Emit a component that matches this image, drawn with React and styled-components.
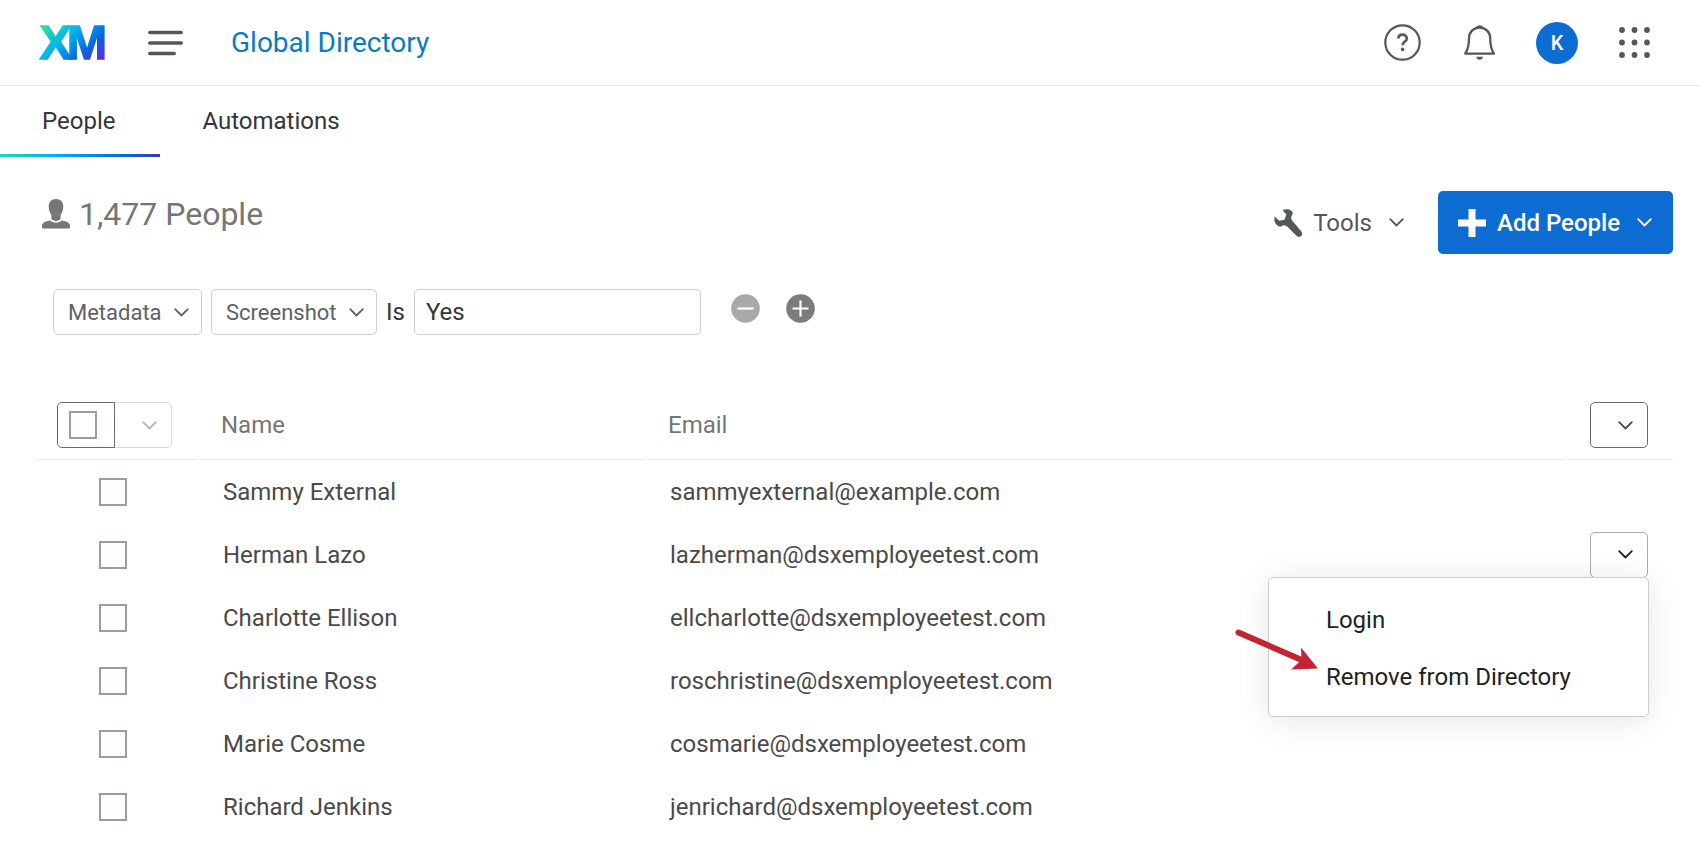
import React, { useState } from 'react';
import styled, { createGlobalStyle } from 'styled-components';

const GlobalStyle = createGlobalStyle`
  * {
    box-sizing: border-box;
  }

  body {
    margin: 0;
    background: #fff;
    color: #32363a;
    font-family: Roboto, "Liberation Sans", sans-serif;
    font-size: 24px;
    line-height: 32px;
  }

  button, input, select {
    font-family: inherit;
    color: inherit;
    margin: 0;
  }
`

const Header = styled.header`
  display: flex;
  align-items: center;
  height: 86px;
  padding: 0 50px 0 39px;
  border-bottom: 1px solid #e9eaeb;
`

const IconButton = styled.button`
  display: flex;
  padding: 0;
  border: 0;
  background: none;
  color: #54585d;
  cursor: pointer;
`

const LogoLink = styled.a`
  display: flex;
  margin-right: 41px;
`

const AppTitle = styled.a`
  margin-left: 48px;
  color: #0b7bc1;
  font-size: 28px;
  text-decoration: none;
`

const HeaderActions = styled.div`
  display: flex;
  align-items: center;
  gap: 41px;
  margin-left: auto;
`

const Avatar = styled.button`
  width: 42px;
  height: 42px;
  padding: 0;
  border: 0;
  border-radius: 50%;
  background: #0d6cd1;
  color: #fff;
  font-size: 20px;
  font-weight: 500;
`

const Tabs = styled.nav`
  display: flex;
`

const Tab = styled.a`
  height: 71px;
  padding: 19px 45px 0 42px;
  color: #32363a;
  text-decoration: none;
  border-bottom: 3px solid transparent;
  border-image: ${props => props.$active ? 'linear-gradient(90deg, #21d5c5, #04aef0 35%, #0768dd 78%, #3f35b5) 1' : 'none'};
`

const TitleBar = styled.div`
  display: flex;
  align-items: flex-start;
  justify-content: space-between;
  padding: 34px 27px 0 42px;
`

const Title = styled.h1`
  display: flex;
  align-items: center;
  gap: 9px;
  margin: 7px 0 0;
  color: #767676;
  font-size: 32px;
  font-weight: 400;
`

const TitleActions = styled.div`
  display: flex;
  align-items: center;
  gap: 34px;
`

const ToolsButton = styled(IconButton)`
  align-items: center;
  gap: 11px;
  font-size: 24px;
`

const AddButton = styled(ToolsButton)`
  height: 63px;
  padding: 0 21px 0 20px;
  border-radius: 5px;
  background: #0d6cd1;
  color: #fff;
  font-weight: 500;
`

const Caret = styled.span`
  display: flex;
  margin-left: 6px;
`

const Filters = styled.form`
  display: flex;
  align-items: center;
  gap: 9px;
  padding: 35px 27px 0 53px;
`

const SelectBox = styled.span`
  position: relative;
  display: flex;
  color: #5f6163;

  svg {
    position: absolute;
    right: 13px;
    top: 19px;
    pointer-events: none;
  }
`

const Select = styled.select`
  appearance: none;
  height: 46px;
  padding: 0 39px 0 14px;
  border: 1px solid #cfcfcf;
  border-radius: 5px;
  background: #fff;
  font-size: 22px;
`

const ValueInput = styled.input`
  width: 287px;
  height: 46px;
  padding: 0 11px;
  border: 1px solid #cfcfcf;
  border-radius: 5px;
  background: #fff;
  font-size: 24px;
`

const FilterButtons = styled.div`
  display: flex;
  gap: 26px;
  margin-left: 21px;
  padding-bottom: 8px;
`

const Main = styled.main`
  padding: 51px 25px 0 34px;
`

const Table = styled.table`
  width: 100%;
  table-layout: fixed;
  border-spacing: 2px 0;

  th, td {
    height: 63px;
    padding: 0 0 0 23px;
    text-align: left;
    font-weight: 400;
    color: #4a4a4a;
  }

  th {
    height: 74px;
    padding: 5px 0 0 21px;
    color: #767676;
    border-bottom: 1px solid #e9eaeb;
  }

  th:last-child, td:last-child {
    padding-left: 0;
    padding-right: 25px;
  }
`

const SelectCol = styled.col`
  width: 162px;
`

const NameCol = styled.col`
  width: 445px;
`

const ActionCol = styled.col`
  width: 106px;
`

const BulkSelect = styled.div`
  display: flex;
`

const BulkCheck = styled.label`
  display: flex;
  align-items: center;
  width: 58px;
  height: 46px;
  padding-left: 11px;
  border: 1px solid #666a6e;
  border-radius: 5px 0 0 5px;
`

const BulkMenuButton = styled(IconButton)`
  align-items: center;
  width: 57px;
  height: 46px;
  padding-left: 27px;
  border: 1px solid #dcdcdc;
  border-left: 0;
  border-radius: 0 5px 5px 0;
  color: #b4b6b8;
`

const Checkbox = styled.input`
  appearance: none;
  display: block;
  width: 28px;
  height: 28px;
  margin: 0;
  border: 2px solid #969ea9;
  background: #fff;

  &:checked {
    background: #0d6cd1;
  }
`

const CheckLabel = styled.label`
  display: flex;
  margin-left: 40px;
`

const ActionWrap = styled.div`
  position: relative;
  display: flex;
  justify-content: flex-end;
`

const ActionButton = styled(IconButton)`
  align-items: center;
  width: 58px;
  height: 46px;
  padding-left: 27px;
  border: 1px solid ${props => props.$open ? '#a9abad' : '#666a6e'};
  border-radius: 5px;
  color: ${props => props.$open ? '#222' : '#4a4a4a'};
`

const Menu = styled.ul`
  position: absolute;
  z-index: 1;
  top: 45px;
  right: -1px;
  width: 381px;
  margin: 0;
  padding: 14px 0 10px;
  list-style: none;
  border: 1px solid #cdcdcd;
  border-radius: 5px;
  background: #fff;
  box-shadow: 0 4px 32px rgba(0, 0, 0, 0.1);
`

const MenuItem = styled.button`
  width: 100%;
  height: 57px;
  padding: 0 0 0 57px;
  border: 0;
  background: none;
  color: #222;
  font-size: 24px;
  text-align: left;
`

const Pointer = styled.li`
  position: absolute;
  top: 48px;
  left: -37px;
  pointer-events: none;
`

const people = [
  { name: 'Sammy External', email: 'sammyexternal@example.com' },
  { name: 'Herman Lazo', email: 'lazherman@dsxemployeetest.com' },
  { name: 'Charlotte Ellison', email: 'ellcharlotte@dsxemployeetest.com' },
  { name: 'Christine Ross', email: 'roschristine@dsxemployeetest.com' },
  { name: 'Marie Cosme', email: 'cosmarie@dsxemployeetest.com' },
  { name: 'Richard Jenkins', email: 'jenrichard@dsxemployeetest.com' }
]

const Chevron = () => (
  <svg width="15" height="9" viewBox="0 0 15 9" fill="none" stroke="currentColor" strokeWidth="1.8" strokeLinecap="round" strokeLinejoin="round">
    <path d="M1.2 1.2L7.5 7.5L13.8 1.2" />
  </svg>
)

const Logo = () => (
  <svg width="68" height="55" viewBox="0 -10 68 55" overflow="visible">
    <defs>
      <linearGradient id="xm" gradientUnits="userSpaceOnUse" x1="10" y1="-4" x2="54" y2="46">
        <stop offset="0" stopColor="#2bdfa0" />
        <stop offset="0.36" stopColor="#04b4ee" />
        <stop offset="0.68" stopColor="#0768dd" />
        <stop offset="1" stopColor="#6a1eea" />
      </linearGradient>
    </defs>
    <text x="0" y="34" dx="0.4 -5" fill="url(#xm)" stroke="url(#xm)" strokeWidth="1.4" fontFamily="Liberation Sans, Arial, sans-serif" fontWeight="700" fontSize="48.5">XM</text>
  </svg>
)

const HamburgerIcon = () => (
  <svg width="35" height="26" viewBox="0 0 35 26" stroke="currentColor" strokeWidth="3.6" strokeLinecap="round">
    <path d="M1.8 2.5H33.2M1.8 13H33.2M1.8 23.5H26.2" />
  </svg>
)

const HelpIcon = () => (
  <svg width="38" height="38" viewBox="0 0 38 38" fill="none" stroke="currentColor" strokeWidth="2.2">
    <circle cx="18.5" cy="18.5" r="17.2" />
    <path d="M14.4 14.6C14.4 12 16.2 10.6 18.6 10.6C21 10.6 22.8 12.2 22.8 14.5C22.8 17.6 18.6 17.6 18.6 21.3" strokeWidth="2.7" />
    <circle cx="18.6" cy="25.4" r="1.8" fill="currentColor" stroke="none" />
  </svg>
)

const BellIcon = () => (
  <svg width="32" height="38" viewBox="0 0 32 38" fill="none" stroke="currentColor" strokeWidth="2.3" strokeLinejoin="round">
    <path d="M2.2 29.6C4.6 26.2 6 22.4 6 14.5C6 8 10.4 3.6 16.6 3.6C22.8 3.6 27.2 8 27.2 14.5C27.2 22.4 28.6 26.2 31 29.6Z" />
    <path d="M12.8 4C13.4 .4 19.8 .4 20.4 4ZM13.2 32.8H20C19.6 36.8 13.6 36.8 13.2 32.8Z" fill="currentColor" stroke="none" />
  </svg>
)

const GridIcon = () => (
  <svg width="31" height="31" viewBox="0 0 31 31" fill="currentColor">
    {[3, 15.5, 28].map(y => [3, 15.5, 28].map(x => <circle key={x + '-' + y} cx={x} cy={y} r="2.9" />))}
  </svg>
)

const PersonIcon = () => (
  <svg width="28" height="30" viewBox="0 0 28 30" fill="currentColor">
    <path d="M14 0C18.7 0 21.3 3 21.3 7.6C21.3 11.5 19.8 14.2 18.6 16V19.8C17.3 22.6 10.7 22.6 9.4 19.8V16C8.2 14.2 6.7 11.5 6.7 7.6C6.7 3 9.3 0 14 0Z" />
    <path d="M8.2 21.4C10.7 24.1 17.3 24.1 19.8 21.4C24.6 22.3 28 23.6 28 26.6V28.4Q28 29.6 26.7 29.6H1.3Q0 29.6 0 28.4V26.6C0 23.6 3.4 22.3 8.2 21.4Z" />
  </svg>
)

const WrenchIcon = () => (
  <svg width="28" height="28" viewBox="0 0 28 28" fill="currentColor">
    <path d="M8.6 1.2C12.8 -.9 18.3 .9 18.8 4.2C18.3 5.8 17.2 7.4 17.2 8.8C17.2 10 17.8 11.4 18.8 12.2L27.4 22.4C28.6 24.3 28.2 26 27.2 27C25.9 28.2 23.7 28.1 22.7 27L13.5 17.7C12.6 16.8 11 16 9.8 16.2C8.3 16.4 7.3 17.8 5.6 17.6C1.8 16.5 -.5 12.4 .6 7.6L5.3 11.7L10.5 10.7L12.3 5.2Z" />
  </svg>
)

const PlusIcon = () => (
  <svg width="28" height="28" viewBox="0 0 28 28" fill="currentColor">
    <path d="M10.5 0H17.5V10.5H28V17.5H17.5V28H10.5V17.5H0V10.5H10.5Z" />
  </svg>
)

const RoundIcon = ({ fill, d }) => (
  <svg width="29" height="29" viewBox="0 0 29 29">
    <circle cx="14.5" cy="14.5" r="14.3" fill={fill} />
    <path d={d} stroke="#fff" strokeWidth="2.2" />
  </svg>
)

const RowMenu = () => (
  <Menu>
    <li><MenuItem type="button">Login</MenuItem></li>
    <li><MenuItem type="button">Remove from Directory</MenuItem></li>
    <Pointer aria-hidden="true">
      <svg width="88" height="46" viewBox="0 0 88 46">
        <path d="M6.5 6.5L72 35" stroke="#c32433" strokeWidth="6" strokeLinecap="round" />
        <path d="M86 42.5L69 21.5L69.5 34L59 43.5Z" fill="#c32433" />
      </svg>
    </Pointer>
  </Menu>
)

const PersonRow = ({ person, open, onToggle }) => (
  <tr>
    <td>
      <CheckLabel><Checkbox type="checkbox" aria-label={'Select ' + person.name} /></CheckLabel>
    </td>
    <td>{person.name}</td>
    <td>{person.email}</td>
    <td>
      {open &&
        <ActionWrap>
          <ActionButton $open type="button" aria-label="Row actions" aria-expanded="true" onClick={onToggle}><Chevron /></ActionButton>
          <RowMenu />
        </ActionWrap>
      }
    </td>
  </tr>
)

const App = () => {
  const [openRow, setOpenRow] = useState(1)
  const [value, setValue] = useState('Yes')

  return (
    <>
      <GlobalStyle />
      <Header>
        <LogoLink href="#"><Logo /></LogoLink>
        <IconButton type="button" aria-label="Menu"><HamburgerIcon /></IconButton>
        <AppTitle href="#">Global Directory</AppTitle>
        <HeaderActions>
          <IconButton type="button" aria-label="Help"><HelpIcon /></IconButton>
          <IconButton type="button" aria-label="Notifications"><BellIcon /></IconButton>
          <Avatar type="button">K</Avatar>
          <IconButton type="button" aria-label="Apps"><GridIcon /></IconButton>
        </HeaderActions>
      </Header>

      <Tabs>
        <Tab $active href="#people">People</Tab>
        <Tab href="#automations">Automations</Tab>
      </Tabs>

      <TitleBar>
        <Title><PersonIcon /> 1,477 People</Title>
        <TitleActions>
          <ToolsButton type="button"><WrenchIcon /> Tools <Caret><Chevron /></Caret></ToolsButton>
          <AddButton type="button"><PlusIcon /> Add People <Caret><Chevron /></Caret></AddButton>
        </TitleActions>
      </TitleBar>

      <Filters onSubmit={e => e.preventDefault()}>
        <SelectBox>
          <Select aria-label="Filter type"><option>Metadata</option></Select>
          <Chevron />
        </SelectBox>
        <SelectBox>
          <Select aria-label="Filter field"><option>Screenshot</option></Select>
          <Chevron />
        </SelectBox>
        <label htmlFor="filter-value">Is</label>
        <ValueInput id="filter-value" value={value} onChange={e => setValue(e.target.value)} />
        <FilterButtons>
          <IconButton type="button" aria-label="Remove condition"><RoundIcon fill="#a9a9a9" d="M6.5 14.5H22.5" /></IconButton>
          <IconButton type="button" aria-label="Add condition"><RoundIcon fill="#7b7c7c" d="M6.5 14.5H22.5M14.5 6.5V22.5" /></IconButton>
        </FilterButtons>
      </Filters>

      <Main>
        <Table>
          <colgroup>
            <SelectCol />
            <NameCol />
            <col />
            <ActionCol />
          </colgroup>
          <thead>
            <tr>
              <th>
                <BulkSelect>
                  <BulkCheck><Checkbox type="checkbox" aria-label="Select all" /></BulkCheck>
                  <BulkMenuButton type="button" aria-label="Selection options"><Chevron /></BulkMenuButton>
                </BulkSelect>
              </th>
              <th>Name</th>
              <th>Email</th>
              <th>
                <ActionWrap>
                  <ActionButton type="button" aria-label="Table actions"><Chevron /></ActionButton>
                </ActionWrap>
              </th>
            </tr>
          </thead>
          <tbody>
            {
              people.map((person, i) =>
                <PersonRow key={person.email} person={person} open={openRow === i} onToggle={() => setOpenRow(null)} />
              )
            }
          </tbody>
        </Table>
      </Main>
    </>
  )
}

export default App;
